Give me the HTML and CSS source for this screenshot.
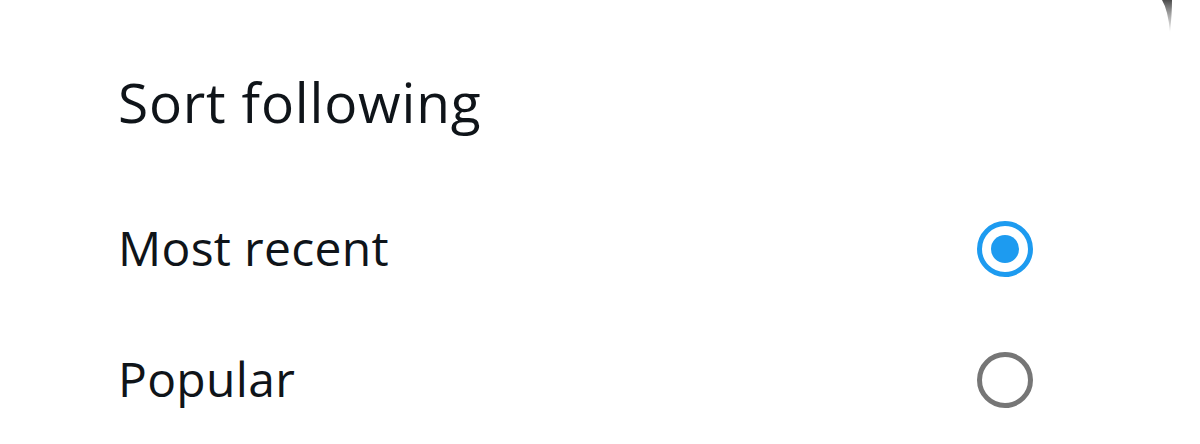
FILE: index.html
```html
<!DOCTYPE html>
<html lang="en">
<head>
<meta charset="utf-8">
<title>Sort following</title>
<link rel="stylesheet" href="styles.css">
</head>
<body>
<div class="sheet">
  <svg class="corner" width="20" height="40" viewBox="0 0 20 40" aria-hidden="true">
    <defs>
      <linearGradient id="cg" x1="0" y1="0" x2="0" y2="1">
        <stop offset="0" stop-color="#4a4a4a"/>
        <stop offset="1" stop-color="#9a9a9a" stop-opacity="0.2"/>
      </linearGradient>
    </defs>
    <path d="M2,0 Q8,10 10,32 Q12,14 12,0 Z" fill="url(#cg)"/>
  </svg>
  <h1 class="title">Sort following</h1>
  <div class="options">
    <div class="option">
      <span class="label">Most recent</span>
      <span class="radio radio-on"><span class="dot"></span></span>
    </div>
    <div class="option">
      <span class="label">Popular</span>
      <span class="radio radio-off"></span>
    </div>
  </div>
</div>
</body>
</html>
```
FILE: styles.css
```css
html, body {
  margin: 0;
  padding: 0;
  background: #ffffff;
}
body {
  width: 1200px;
  height: 444px;
  overflow: hidden;
  font-family: "Open Sans", "Liberation Sans", sans-serif;
  color: #0f1419;
}
.sheet {
  position: relative;
  height: 444px;
  padding: 66px 167px 0 118px;
  box-sizing: border-box;
}
.corner {
  position: absolute;
  top: 0;
  left: 1160px;
}
.title {
  margin: 0;
  font-size: 55px;
  font-weight: 400;
  line-height: 72px;
  letter-spacing: 0.8px;
}
.options {
  display: flex;
  flex-direction: column;
  margin-top: 45.5px;
}
.option {
  display: flex;
  align-items: center;
  justify-content: space-between;
  height: 131px;
}
.label {
  font-size: 48px;
  line-height: 64px;
  margin-top: -3px;
  letter-spacing: 0.3px;
}
.radio {
  width: 56px;
  height: 56px;
  border-radius: 50%;
  box-sizing: border-box;
  border: 5.5px solid #767676;
  display: flex;
  align-items: center;
  justify-content: center;
}
.radio-on {
  border-color: #1d9bf0;
}
.dot {
  width: 28px;
  height: 28px;
  border-radius: 50%;
  background: #1d9bf0;
}
```
